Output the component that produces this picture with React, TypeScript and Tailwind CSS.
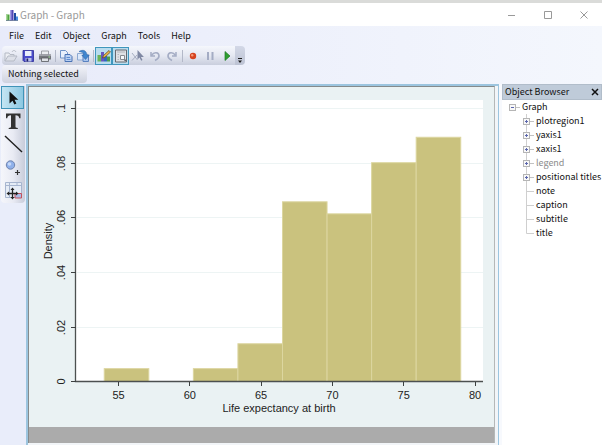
import { useState } from 'react';
import type { ReactNode } from 'react';
import clsx from 'clsx';

const MENUS = ['File', 'Edit', 'Object', 'Graph', 'Tools', 'Help'];

const TREE = [
  { label: 'plotregion1', branch: true },
  { label: 'yaxis1', branch: true },
  { label: 'xaxis1', branch: true },
  { label: 'legend', branch: true, muted: true },
  { label: 'positional titles', branch: true },
  { label: 'note' },
  { label: 'caption' },
  { label: 'subtitle' },
  { label: 'title' },
];

// Histogram: eight bins starting at 54
const BIN_START = 54;
const BIN_WIDTH = 3.125;
const DENSITY = [0.0047, 0, 0.0047, 0.0138, 0.0657, 0.0613, 0.08, 0.0893];
const X_TICKS = [55, 60, 65, 70, 75, 80];
const Y_TICKS = [
  { value: 0, label: '0' },
  { value: 0.02, label: '.02' },
  { value: 0.04, label: '.04' },
  { value: 0.06, label: '.06' },
  { value: 0.08, label: '.08' },
  { value: 0.1, label: '.1' },
];

const X_SCALE = 14.26;
const xPos = (v: number) => 89.5 + (v - 55) * X_SCALE;
const yPos = (v: number) => 293.5 - v * 2735;

function Icon({ children }: { children: ReactNode }) {
  return (
    <svg className="size-4 shrink-0" viewBox="0 0 16 16" fill="none" aria-hidden="true">
      {children}
    </svg>
  );
}

function ChartLogo() {
  return (
    <svg className="size-3.5" viewBox="0 0 14 14" aria-hidden="true">
      <path d="M0 6.500h3.500v6H0z" fill="#4fa33f" />
      <path d="M0 6.500h1.500v6H0z" fill="#a5d795" />
      <path d="M4 2h3.500v10.500H4z" fill="#5147b5" />
      <path d="M4 2h1.500v10.500H4z" fill="#a29be4" />
      <path d="M8 5h2v7.500H8z" fill="#1f489f" />
      <path d="M10 8.500h2v4h-2z" fill="#4a90e0" />
      <path d="M0 12.300h12v.7H0z" fill="#5b6d8c" />
    </svg>
  );
}

function ToolButton({ label, active, children }: { label: string; active?: boolean; children: ReactNode }) {
  return (
    <button
      type="button"
      aria-label={label}
      aria-pressed={active}
      className={clsx(
        'flex h-[18px] w-[17px] items-center justify-center border',
        active ? 'border-[#3f96bd] bg-[#b9dcee]' : 'border-transparent'
      )}
    >
      {children}
    </button>
  );
}

function Separator() {
  return (
    <div className="flex w-1 justify-center">
      <div className="h-3 w-px bg-[#b3b8c8]" />
    </div>
  );
}

function Toolbar() {
  return (
    <div className="flex h-[19px] pl-0.5">
      <div className="flex items-center rounded-l-sm bg-linear-to-b from-[#f5f7fc] via-[#e5e8f2] to-[#c9cedd]">
        <ToolButton label="Open">
          <Icon>
            <path d="M2 13V5h4l1 1.500h4V8" stroke="#b5bac5" fill="#eceef3" />
            <path d="M2 13l3-5h9l-3 5z" stroke="#b5bac5" fill="#dde0e8" />
            <path d="M9 4c1-2 3-2 4 0" stroke="#b5bac5" />
          </Icon>
        </ToolButton>
        <ToolButton label="Save">
          <Icon>
            <path d="M3 2.500h10.500v11H4l-1-1z" fill="#4a4cca" stroke="#2b2b96" strokeWidth=".8" />
            <path d="M5 3h6.500v5H5z" fill="#e9eefb" />
            <path d="M5.500 10h6v3.500h-6z" fill="#b9c0e6" />
            <path d="M6.500 10.500h1.700v3H6.500z" fill="#20206b" />
          </Icon>
        </ToolButton>
        <ToolButton label="Print">
          <Icon>
            <path d="M4.500 3h7v4h-7z" fill="#eceef2" stroke="#8a8d94" strokeWidth=".8" />
            <path d="M2 6.500h12v5H2z" fill="#74777d" />
            <path d="M2 6.500h12v1.500H2z" fill="#a0a3aa" />
            <path d="M4.500 10h7v3.500h-7z" fill="#dfe2e6" stroke="#55585d" strokeWidth=".8" />
            <path d="M11.500 8.500H13v1h-1.500z" fill="#9be08e" />
          </Icon>
        </ToolButton>
        <Separator />
        <ToolButton label="Copy">
          <Icon>
            <path d="M2.500 2.500h5l2 2V10h-7z" fill="#e8f0fc" stroke="#6f93c8" />
            <path d="M7 6.500h5l2 2v5H7z" fill="#b9d0f2" stroke="#4a73b5" />
            <path d="M8.500 9.500H12M8.500 11.500h4" stroke="#5f8cd0" />
          </Icon>
        </ToolButton>
        <ToolButton label="Rename">
          <Icon>
            <path d="M2.500 5.500h6V12h-6z" fill="#dce8fa" stroke="#8da9d2" />
            <path d="M8 7h5.500v6.500H8z" fill="#a8c5ee" stroke="#5a82c0" />
            <path d="M4 3.500c4-2.500 7.500-1 8 3.500h2.300L10.500 11.500 6.800 7H9C8.700 5 7 3.800 4 3.500z" fill="#3f86cf" stroke="#2a62a5" strokeWidth=".5" />
          </Icon>
        </ToolButton>
        <Separator />
        <ToolButton label="Graph Editor" active>
          <Icon>
            <path d="M1.500 7h3.500v6.500H1.500z" fill="#6bb357" />
            <path d="M5 4h3v9.500H5z" fill="#6556bd" />
            <path d="M8 8h3v5.500H8z" fill="#2f68bd" />
            <path d="M11 8.500h3v5h-3z" fill="#4a9a4c" />
            <path d="M6.500 10l1-2.500 5.500-5L14.500 4 9 9.200z" fill="#e8b544" stroke="#584224" strokeWidth=".7" />
          </Icon>
        </ToolButton>
        <ToolButton label="Object Browser" active>
          <Icon>
            <path d="M2.500 2h11v12h-11z" fill="#dfe1e5" stroke="#66696f" />
            <path d="M4 4h8M4.500 6.500H6M4.500 9H6M4.500 11.500H6" stroke="#b3b6bc" />
            <path d="M7.500 7.500h4v4h-4z" fill="#f6f8fa" stroke="#868a90" />
            <path d="M11.500 11.500l1.200 1.500" stroke="#55585e" strokeWidth="1.300" />
          </Icon>
        </ToolButton>
        <ToolButton label="Select">
          <Icon>
            <path d="M7.500 2v9.500l2-2 1.700 3.300 1.300-.7-1.600-3.100h3z" fill="#7f88a3" />
            <path d="M2 5l5.500 7M7 7l-5 5.500" stroke="#a7aec2" />
          </Icon>
        </ToolButton>
        <ToolButton label="Undo">
          <Icon>
            <path d="M4 4v4h4" stroke="#a4acc4" strokeWidth="1.500" />
            <path d="M4.500 7.500C7 3.500 12 4 12 8c0 2-2 3.500-4 4.500" stroke="#a4acc4" strokeWidth="1.600" />
          </Icon>
        </ToolButton>
        <ToolButton label="Redo">
          <Icon>
            <path d="M12 4v4H8" stroke="#a4acc4" strokeWidth="1.500" />
            <path d="M11.500 7.500C9 3.500 4 4 4 8c0 2 2 3.500 4 4.500" stroke="#a4acc4" strokeWidth="1.600" />
          </Icon>
        </ToolButton>
        <Separator />
        <ToolButton label="Record">
          <Icon>
            <circle cx="8" cy="8" r="3.200" fill="#d6431f" />
            <circle cx="7.200" cy="7.200" r="1.200" fill="#f59a78" />
          </Icon>
        </ToolButton>
        <ToolButton label="Pause">
          <Icon>
            <path d="M6 4v8M10.500 4v8" stroke="#a4acc4" strokeWidth="2" />
          </Icon>
        </ToolButton>
        <ToolButton label="Play">
          <Icon>
            <path d="M6 3.500v9l5-4.500z" fill="#2f9e2f" stroke="#1d7a24" strokeWidth=".7" />
          </Icon>
        </ToolButton>
      </div>
      <button
        type="button"
        aria-label="Toolbar options"
        className="flex w-2.5 items-end justify-center rounded-r-sm bg-linear-to-b from-[#d3d8e7] to-[#bcc2d3]"
      >
        <svg className="size-2" viewBox="0 0 8 8" aria-hidden="true">
          <path d="M2 1h4v1H2zM2 3.500h4L4 6z" fill="#1c1c1c" />
        </svg>
      </button>
    </div>
  );
}

function SideButton({ label, active, children }: { label: string; active?: boolean; children: ReactNode }) {
  return (
    <button
      type="button"
      aria-label={label}
      aria-pressed={active}
      className={clsx(
        'flex h-[23px] w-[23px] items-center justify-center border',
        active ? 'border-[#3f93b8] bg-linear-to-r from-[#c5e5f3] to-[#8cc8e2]' : 'border-transparent'
      )}
    >
      <svg className="size-5 shrink-0" viewBox="0 0 20 20" fill="none" aria-hidden="true">
        {children}
      </svg>
    </button>
  );
}

function SideTools() {
  return (
    <div className="w-[26px] shrink-0 pl-px pt-0.5">
      <div className="flex w-6 flex-col rounded-b-sm bg-linear-to-r from-[#f5f6fb] via-[#e9ebf4] to-[#c8ccda] pb-0.5">
        <SideButton label="Pointer" active>
          <path d="M6.500 3.500v12l3-2.800 1.900 3.800 2-1-1.900-3.700h3.800z" fill="#111" />
        </SideButton>
        <SideButton label="Add text">
          <path
            d="M3 2.500h14.500v4.800h-1.200c-.5-2.300-1.300-3-3.800-3v11.200c0 1 .5 1.300 2.300 1.500v1H5.700v-1C7.500 16.800 8 16.500 8 15.500V4.300c-2.500 0-3.300.7-3.800 3H3z"
            fill="#333"
          />
        </SideButton>
        <SideButton label="Add line">
          <path d="M2 2l17 16" stroke="#1e1e1e" strokeWidth="1.400" />
        </SideButton>
        <SideButton label="Add marker">
          <circle cx="7.500" cy="8" r="4.200" fill="#8fb0ea" stroke="#6f83ad" />
          <circle cx="6.500" cy="7" r="1.800" fill="#c5d8f8" />
          <path d="M12 15.500h5M14.500 13v5" stroke="#333" strokeWidth="1.200" />
        </SideButton>
        <SideButton label="Grid edit">
          <path d="M2.500 2.500h16v15h-16z" fill="#e6ecf6" stroke="#a7b5cf" />
          <path d="M2.500 5.500h16M6.500 2.500v15M14 2.500v3" stroke="#a7b5cf" />
          <path d="M12 13.500h6.500V18H12z" fill="#aabbe5" stroke="#c6505b" />
          <path d="M9.500 9v9M5 13.500h9" stroke="#222" strokeWidth="1.300" />
          <path d="M9.500 7.500l2 2.500h-4zM9.500 19.500l-2-2.500h4zM3.500 13.500l2.500-2v4zM15.500 13.500l-2.500-2v4z" fill="#222" />
        </SideButton>
      </div>
    </div>
  );
}

function Histogram() {
  return (
    <svg
      className="block h-auto w-full bg-[#eaf2f3] font-['Liberation_Sans',Arial,sans-serif] text-[11px]"
      viewBox="0 -1 465 340"
      role="img"
      aria-label="Histogram of life expectancy at birth"
    >
      <rect x="47" y="12" width="407" height="282" fill="#fff" />

      {/* Grid lines */}
      {Y_TICKS.slice(1).map((t) => (
        <path key={t.label} d={`M48 ${Math.round(yPos(t.value)) + 0.5}H454`} stroke="#edf4f4" />
      ))}

      {DENSITY.map((d, i) =>
        d ? (
          <rect
            key={i}
            x={xPos(BIN_START + i * BIN_WIDTH)}
            y={yPos(d)}
            width={BIN_WIDTH * X_SCALE}
            height={yPos(0) - yPos(d)}
            fill="#cac27e"
            stroke="#dcd6a0"
          />
        ) : null
      )}

      {/* Axes */}
      <path d="M46.500 12.500V293.500H454" fill="none" stroke="#4c5050" strokeWidth="1.300" />

      {Y_TICKS.map((t) => {
        const y = Math.round(yPos(t.value)) + (t.value ? 0.5 : -0.5);

        return (
          <g key={t.label}>
            <path d={`M42 ${y}h5`} stroke="#3c4040" />
            <text transform={`translate(36 ${y}) rotate(-90)`} textAnchor="middle" fill="#222">
              {t.label}
            </text>
          </g>
        );
      })}
      {X_TICKS.map((v) => (
        <g key={v}>
          <path d={`M${Math.floor(xPos(v)) + 0.5} 294v4`} stroke="#3c4040" />
          <text x={xPos(v)} y="311" textAnchor="middle" fill="#222">
            {v}
          </text>
        </g>
      ))}

      <text transform="translate(23 153) rotate(-90)" textAnchor="middle" fill="#222">
        Density
      </text>
      <text x="250" y="324" textAnchor="middle" fill="#222">
        Life expectancy at birth
      </text>
    </svg>
  );
}

function Expander({ open, onClick, label }: { open: boolean; onClick: () => void; label: string }) {
  return (
    <button type="button" aria-label={label} aria-expanded={open} onClick={onClick} className="size-3.5 shrink-0">
      <svg className="size-3.5" viewBox="0 0 14 14" aria-hidden="true">
        <path d="M8 7.500h4" stroke="#c2c2c2" />
        <rect x="1.500" y="4.500" width="6" height="6" fill="#f8f8f8" stroke="#b5b5b5" />
        <path d={open ? 'M3 7.500h3' : 'M3 7.500h3M4.500 6v3'} stroke="#5c67ad" />
      </svg>
    </button>
  );
}

function ObjectBrowser() {
  const [open, setOpen] = useState(true);
  const [expanded, setExpanded] = useState<string[]>([]);

  const toggle = (label: string) =>
    setExpanded((prev) => (prev.includes(label) ? prev.filter((l) => l !== label) : [...prev, label]));

  return (
    <aside className="w-[100px] shrink-0 bg-white">
      <div className="flex h-4 items-center justify-between border border-[#b1bdca] bg-[#bfcbd9] px-0.5">
        <h2>Object Browser</h2>
        <button type="button" aria-label="Close">
          <svg className="size-2" viewBox="0 0 8 8" aria-hidden="true">
            <path d="M1 1l6 6M7 1L1 7" stroke="#111" strokeWidth="1.500" />
          </svg>
        </button>
      </div>
      <div className="pl-1.5 leading-[14px]">
        <div className="flex">
          <Expander open={open} onClick={() => setOpen(!open)} label="Graph" />
          <span>Graph</span>
        </div>
        {open && (
          <ul className="pl-3.5">
            {TREE.map((node, i) => (
              <li key={node.label} className="flex whitespace-nowrap">
                <span className="relative flex">
                  <svg className="absolute inset-0 size-3.5" viewBox="0 0 14 14" aria-hidden="true">
                    <path
                      d={i === TREE.length - 1 ? 'M4.500 0v7.500H12' : 'M4.500 0v14M4.500 7.500H12'}
                      fill="none"
                      stroke="#cfcfcf"
                    />
                  </svg>
                  {node.branch ? (
                    <span className="relative flex">
                      <Expander
                        open={expanded.includes(node.label)}
                        onClick={() => toggle(node.label)}
                        label={node.label}
                      />
                    </span>
                  ) : (
                    <span className="w-3.5" />
                  )}
                </span>
                <span className={node.muted ? 'text-[#8b8b8b]' : undefined}>{node.label}</span>
              </li>
            ))}
          </ul>
        )}
      </div>
    </aside>
  );
}

export default function App() {
  return (
    <div className="flex min-h-screen flex-col bg-[#e9edfa] font-['Noto_Sans_CJK_KR','Noto_Sans',sans-serif] text-[9px] leading-[14px] text-[#111]">
      {/* Title bar */}
      <header className="flex h-[26px] items-center justify-between border-t-[3px] border-[#dadbd9] bg-white pl-1.5">
        <div className="flex items-center">
          <ChartLogo />
          <h1 className="text-[10px] text-[#999]">Graph - Graph</h1>
        </div>
        <div className="flex text-[#999]">
          <button type="button" aria-label="Minimize" className="flex h-5 w-9 items-center justify-center">
            <svg className="size-2" viewBox="0 0 8 8" aria-hidden="true">
              <path d="M0 4.500h7" stroke="currentColor" />
            </svg>
          </button>
          <button type="button" aria-label="Maximize" className="flex h-5 w-9 items-center justify-center">
            <svg className="size-2" viewBox="0 0 8 8" fill="none" aria-hidden="true">
              <path d="M.5.5h7v7h-7z" stroke="currentColor" />
            </svg>
          </button>
          <button type="button" aria-label="Close window" className="flex h-5 w-9 items-center justify-center">
            <svg className="size-2" viewBox="0 0 8 8" aria-hidden="true">
              <path d="M.5.5l7 7M7.500.5l-7 7" stroke="currentColor" />
            </svg>
          </button>
        </div>
      </header>

      <div className="bg-linear-to-r from-[#e8ebfa] to-[#f4f7fd]">
        <nav className="flex h-5 items-center gap-[11px] pl-[9px]">
          {MENUS.map((m) => (
            <button type="button" key={m}>
              {m}
            </button>
          ))}
        </nav>
        <Toolbar />
        <div className="flex h-[19px] pb-px pl-0.5">
          <div className="flex items-center rounded-sm bg-linear-to-b from-[#f3f4fa] to-[#ced2df] pl-1.5 pr-2">
            Nothing selected
          </div>
        </div>
      </div>

      <main className="flex flex-1">
        <SideTools />
        <div className="flex min-w-0 flex-1 flex-col border-2 border-b-0 border-r border-[#9cc5df] bg-[#f2f5f8] pb-0.5 pr-[3px]">
          <div className="flex flex-1 flex-col border border-b-0 border-[#858b8c] border-r-[#b4b8b8] bg-[#ababab]">
            <Histogram />
          </div>
        </div>
        <div className="w-[3px] bg-[#f7f9fd]" />
        <ObjectBrowser />
      </main>
    </div>
  );
}
